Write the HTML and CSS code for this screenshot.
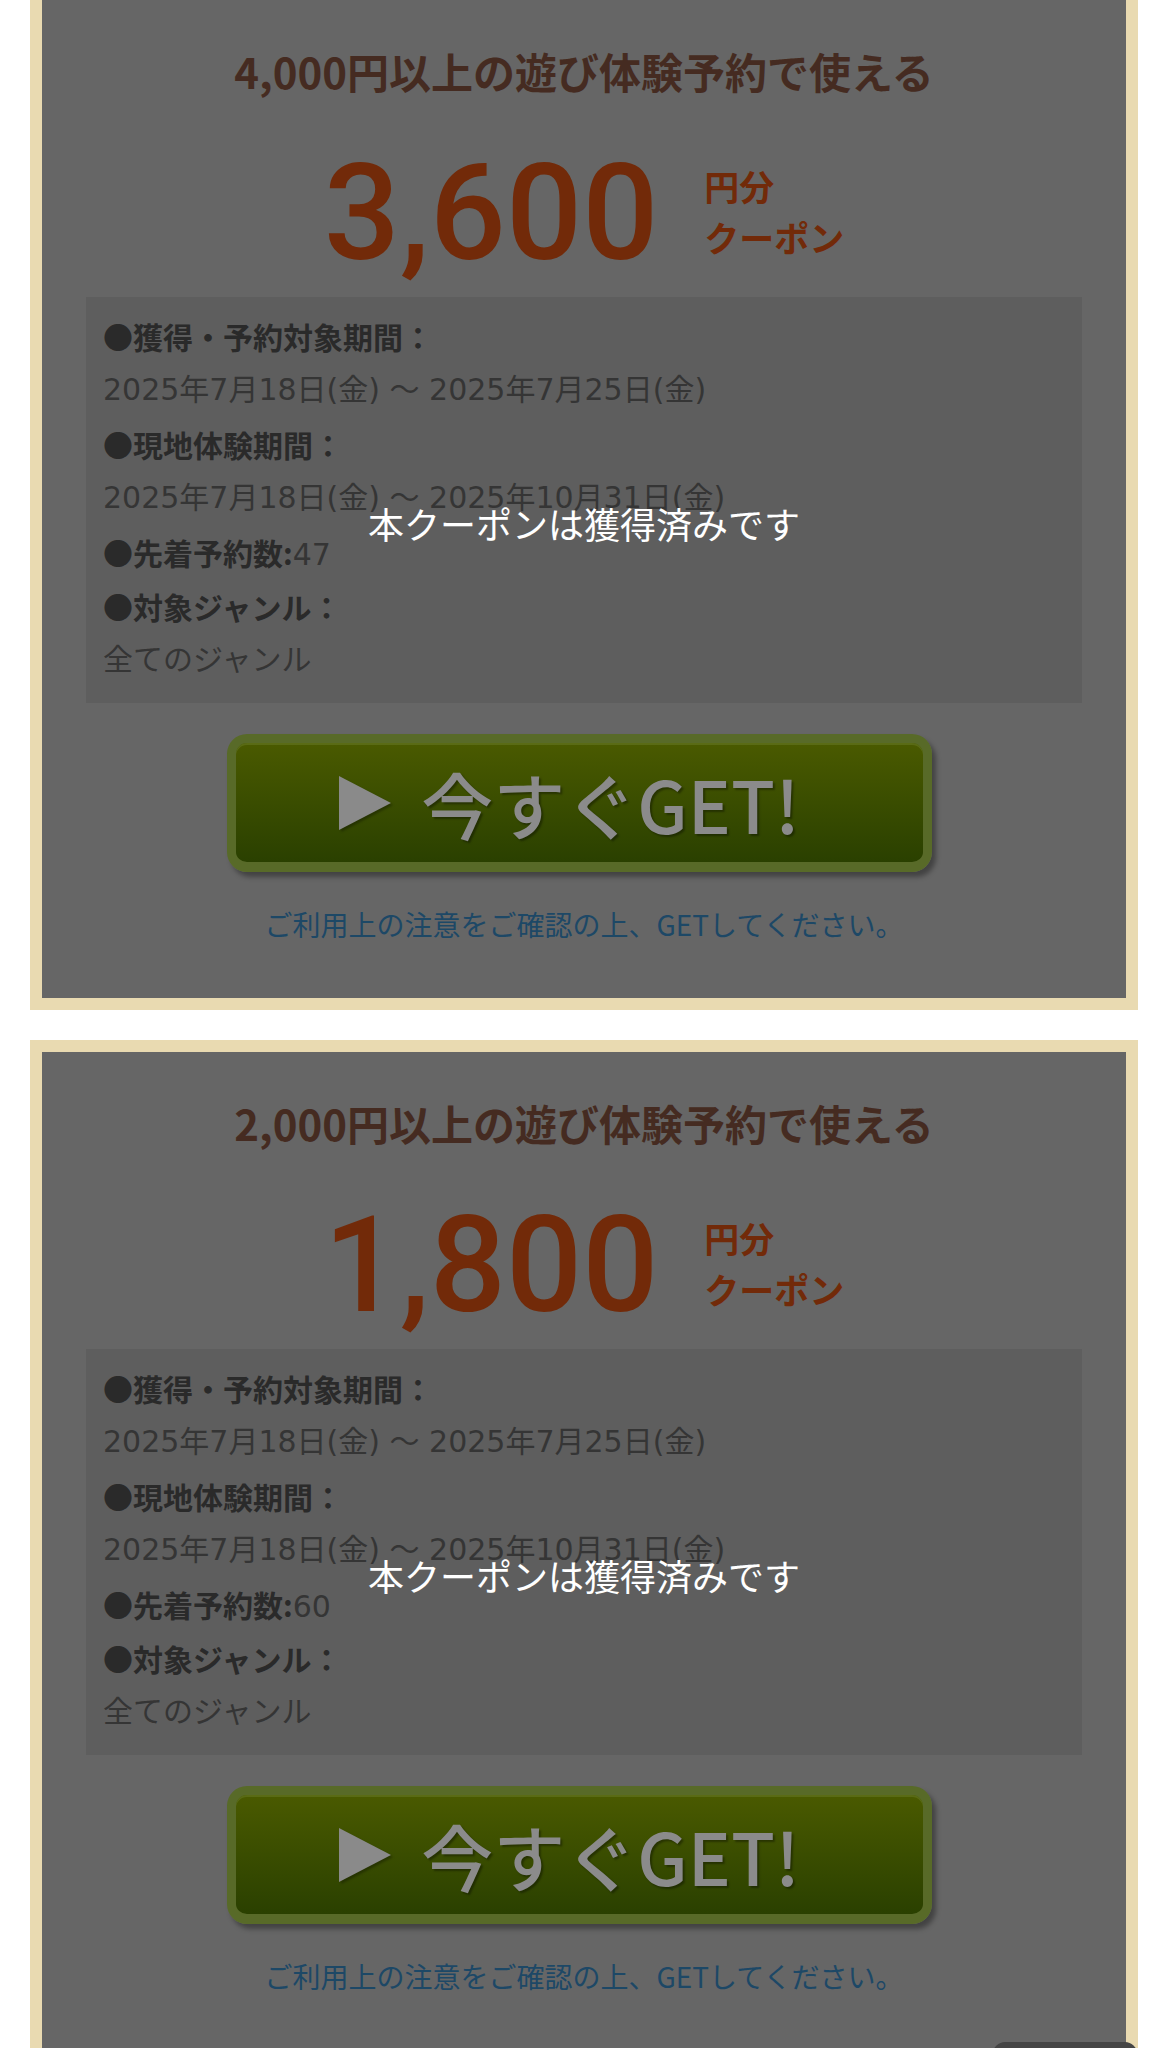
FILE: index.html
```html
<!DOCTYPE html>
<html lang="ja">
<head>
  <meta charset="UTF-8" />
  <meta name="viewport" content="width=device-width, initial-scale=1.0"/>
  <title>クーポン一覧</title>
  <link rel="stylesheet" href="styles.css">
</head>
<body>
  <div class="coupon-list">

    <div class="coupon is-claimed">
      <div class="coupon-body">
        <h2 class="coupon-title">4,000円以上の遊び体験予約で使える</h2>
        <div class="coupon-amount">
          <span class="amount-num">3,600</span>
          <span class="amount-unit">円分<br>クーポン</span>
        </div>
        <div class="coupon-info">
          <p class="info-label">●獲得・予約対象期間：</p>
          <p>2025年7月18日(金) 〜 2025年7月25日(金)</p>
          <p class="info-label">●現地体験期間：</p>
          <p>2025年7月18日(金) 〜 2025年10月31日(金)</p>
          <p><span class="info-label">●先着予約数:</span>47</p>
          <p class="info-label">●対象ジャンル：</p>
          <p>全てのジャンル</p>
        </div>
        <div class="get-wrap">
          <a class="get-btn" href="#">
            <svg class="get-arrow" width="52" height="54" viewBox="0 0 52 54"><polygon points="0,0 52,27 0,54" /></svg>
            <span>今すぐGET!</span>
          </a>
        </div>
        <p class="get-note">ご利用上の注意をご確認の上、GETしてください。</p>

        <div class="claimed-overlay">
          <span class="claimed-label">本クーポンは獲得済みです</span>
        </div>
      </div>
    </div>

    <div class="coupon is-claimed">
      <div class="coupon-body">
        <h2 class="coupon-title">2,000円以上の遊び体験予約で使える</h2>
        <div class="coupon-amount">
          <span class="amount-num">1,800</span>
          <span class="amount-unit">円分<br>クーポン</span>
        </div>
        <div class="coupon-info">
          <p class="info-label">●獲得・予約対象期間：</p>
          <p>2025年7月18日(金) 〜 2025年7月25日(金)</p>
          <p class="info-label">●現地体験期間：</p>
          <p>2025年7月18日(金) 〜 2025年10月31日(金)</p>
          <p><span class="info-label">●先着予約数:</span>60</p>
          <p class="info-label">●対象ジャンル：</p>
          <p>全てのジャンル</p>
        </div>
        <div class="get-wrap">
          <a class="get-btn" href="#">
            <svg class="get-arrow" width="52" height="54" viewBox="0 0 52 54"><polygon points="0,0 52,27 0,54" /></svg>
            <span>今すぐGET!</span>
          </a>
        </div>
        <p class="get-note">ご利用上の注意をご確認の上、GETしてください。</p>

        <div class="claimed-overlay">
          <span class="claimed-label">本クーポンは獲得済みです</span>
        </div>
      </div>
    </div>

  </div>

  <a class="page-top" href="#"></a>
</body>
</html>
```

FILE: styles.css
```css
body {
  margin: 0;
  background-color: #fff;
  font-family: "Noto Sans CJK JP", "Noto Sans", sans-serif;
}

.coupon-list {
  display: flex;
  flex-direction: column;
  gap: 30px;
  margin: -12px 30px 0;
}

.coupon {
  border: 12px solid #e9dab1;
}

/* claimed coupons are shown dimmed, with a label over the body */
.coupon-body {
  position: relative;
  background-color: #666;
  padding: 43px 44px 54px;
}

.coupon-title {
  margin: 0;
  text-align: center;
  font-size: 42px;
  line-height: 56px;
  font-weight: 700;
  color: #452b21;
}

.coupon-amount {
  display: flex;
  justify-content: center;
  align-items: center;
  gap: 46px;
  margin-top: 48px;
  color: #722a09;
}

.amount-num {
  font-family: Roboto, "Liberation Sans", sans-serif;
  font-size: 134px;
  line-height: 128px;
  font-weight: 500;
  position: relative;
  top: 3px;
}

.amount-unit {
  font-size: 35px;
  line-height: 51px;
  font-weight: 700;
}

/* dates and counts use wider latin digits */
.coupon-info {
  margin-top: 22px;
  padding: 12px 17px 16px;
  background-color: #5e5e5e;
  color: #353535;
  font-family: "DejaVu Sans", "Noto Sans CJK JP", sans-serif;
  font-size: 30px;
  line-height: 54px;
}

.coupon-info p {
  margin: 0;
  height: 54px;
}

.info-label {
  font-family: "Noto Sans CJK JP", sans-serif;
  font-weight: 700;
  color: #2a2a2a;
}

.get-wrap {
  display: flex;
  justify-content: center;
  margin-top: 31px;
}

.get-btn {
  display: flex;
  align-items: center;
  justify-content: center;
  gap: 30px;
  box-sizing: border-box;
  width: 705px;
  height: 138px;
  margin-right: 9px;
  padding-right: 20px;
  border: 9px solid #586a28;
  border-bottom-width: 10px;
  border-radius: 20px;
  background: linear-gradient(#4a5a00, #2a4000);
  box-shadow: inset 0 2px 0 rgba(120, 140, 60, 0.35), 4px 5px 5px rgba(0, 0, 0, 0.35);
  text-decoration: none;
  color: #8b8b8b;
  font-size: 72px;
  font-weight: 500;
  text-shadow: 2px 2px 2px rgba(0, 0, 0, 0.35);
}

.get-arrow {
  fill: #8a8a8a;
  filter: drop-shadow(2px 2px 1px rgba(0, 0, 0, 0.3));
}

.get-note {
  margin: 32px 0 0;
  text-align: center;
  font-size: 28px;
  line-height: 40px;
  color: #1d4866;
}

.claimed-overlay {
  position: absolute;
  top: 0;
  left: 0;
  right: 0;
  bottom: 0;
}

.claimed-label {
  position: absolute;
  top: 50%;
  left: 0;
  right: 0;
  text-align: center;
  font-size: 36px;
  line-height: 48px;
  color: #fff;
}

.page-top {
  position: fixed;
  right: 31px;
  bottom: -44px;
  width: 144px;
  height: 50px;
  border-radius: 12px;
  background-color: #454545;
}
```
